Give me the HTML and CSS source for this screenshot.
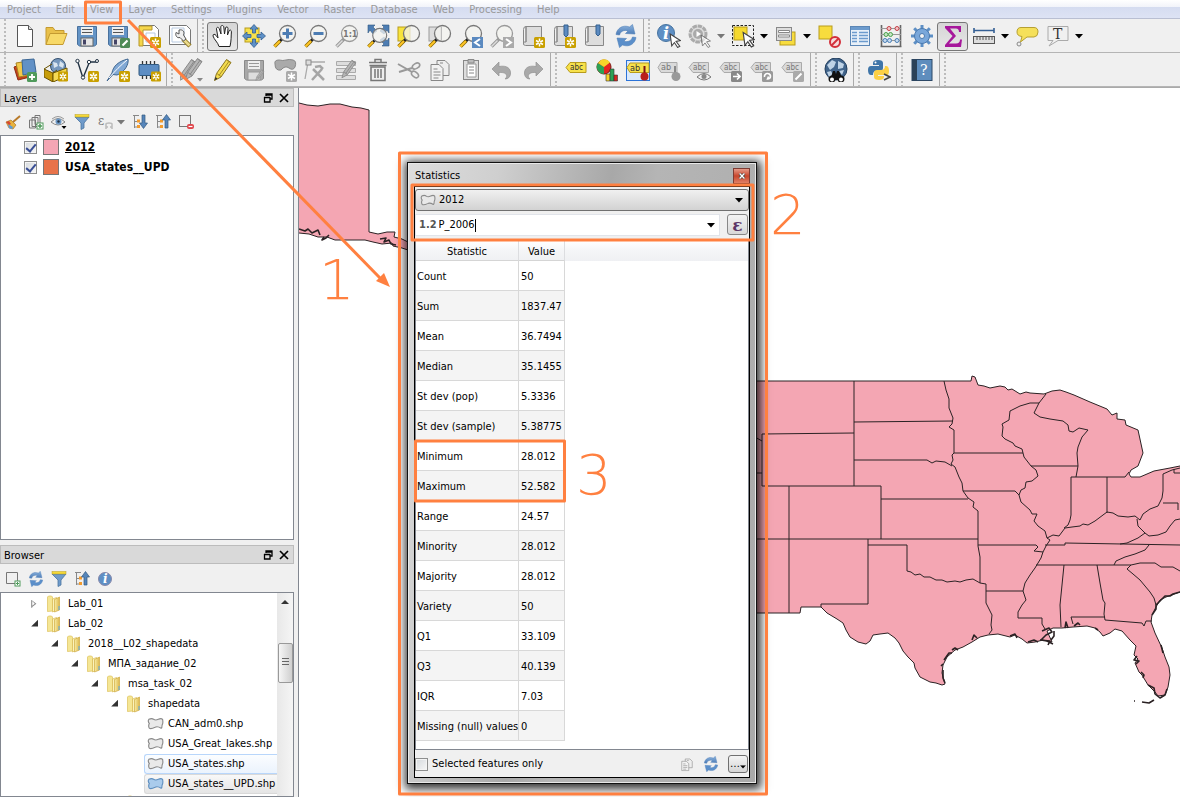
FILE: index.html
```html
<!DOCTYPE html>
<html lang="en">
<head>
<meta charset="utf-8">
<title>Statistics</title>
<link rel="stylesheet" href="styles.css">
</head>
<body>
<svg class="defs" aria-hidden="true">
  <defs>
    <linearGradient id="gFolder" x1="0" x2="1"><stop offset="0" stop-color="#f9eda6"/><stop offset="1" stop-color="#dcb74a"/></linearGradient>
    <linearGradient id="gBlue" x1="0" y1="0" x2="0" y2="1"><stop offset="0" stop-color="#8db4de"/><stop offset="1" stop-color="#4a7ab5"/></linearGradient>
  </defs>
  <symbol id="star" viewBox="0 0 11 11"><rect width="11" height="11" rx="1.5" fill="#c9a000"/><path d="M5.5 1.5v8M2 3.5l7 4M9 3.5l-7 4" stroke="#fff" stroke-width="1.5"/><circle cx="5.5" cy="5.5" r="1" fill="#c9a000"/></symbol>
  <symbol id="stargray" viewBox="0 0 11 11"><rect width="11" height="11" rx="1.5" fill="#aaa"/><path d="M5.5 1.5v8M2 3.5l7 4M9 3.5l-7 4" stroke="#fff" stroke-width="1.5"/></symbol>
  <symbol id="page" viewBox="0 0 24 24"><path d="M4.500 1.500h11l4 4v17h-15z" fill="#fff" stroke="#555"/><path d="M15.500 1.500v4h4" fill="#ddd" stroke="#555"/></symbol>
  <symbol id="floppy" viewBox="0 0 24 24"><path d="M2.500 2.500h19v18l-2 1.500h-15l-2-1.500z" fill="#6494c6" stroke="#49719d"/><rect x="6" y="3" width="12" height="8" fill="#eee"/><path d="M7 5.500h10M7 8.500h10" stroke="#555"/><rect x="6" y="14" width="12" height="8" fill="#e6e6e6" stroke="#666"/><rect x="8" y="15.500" width="3" height="5" fill="#446"/></symbol>
  <symbol id="floppygray" viewBox="0 0 24 24"><path d="M2.500 2.500h19v18l-2 1.500h-15l-2-1.500z" fill="#a8a8a8" stroke="#8a8a8a"/><rect x="6" y="3" width="12" height="8" fill="#eee"/><path d="M7 5.500h10M7 8.500h10" stroke="#999"/><rect x="6" y="14" width="12" height="8" fill="#ddd" stroke="#999"/></symbol>
  <symbol id="mag" viewBox="0 0 24 24"><path d="M9 15l-3 3" stroke="#222" stroke-width="3"/><path d="M7 17l-5.500 5.500" stroke="#8a6a00" stroke-width="3.600"/><path d="M7 17l-5.500 5.500" stroke="#ffc627" stroke-width="2"/><circle cx="14.500" cy="9.500" r="8" fill="#f4f4f0" fill-opacity=".75" stroke="#777" stroke-width="1.300"/></symbol>
  <symbol id="maggray" viewBox="0 0 24 24"><path d="M9 15l-7.500 7.500" stroke="#999" stroke-width="3.400"/><path d="M7.500 16.500l-6 6" stroke="#ddd" stroke-width="1.500"/><circle cx="14.500" cy="9.500" r="8" fill="#f4f4f0" fill-opacity=".75" stroke="#999" stroke-width="1.300"/></symbol>
  <symbol id="sheet" viewBox="0 0 24 24"><path d="M5 2.500h15.500v19H4.500q-3 0-2-3.500h2.500z" fill="#ddd" stroke="#888"/><path d="M5 2.500q-2.500 0-2.500 3v14M5 2.500v15.500" fill="none" stroke="#888"/></symbol>
  <symbol id="refresh" viewBox="0 0 24 24"><path d="M2 10.500C3 4 9 .500 15.500 3l3-2.500 2.500 9.500-9.500-.500 2.500-2.500C10.500 5.500 6.500 7 5.500 11z" fill="url(#gBlue)" stroke="#4f7fb8" stroke-width=".6"/><path d="M22 13.500C21 20 15 23.500 8.500 21l-3 2.500L3 14l9.500.500-2.500 2.500c3.500 1.500 7.500 0 8.500-4z" fill="#5b8fca" stroke="#4f7fb8" stroke-width=".6"/></symbol>
  <symbol id="cursor" viewBox="0 0 12 14"><path d="M1 1l9.500 6-4 .8 3.500 4.600-2 1.100-3-4.600L2.500 12z" fill="#fff" stroke="#444"/></symbol>
  <symbol id="pencil" viewBox="0 0 24 24"><path d="M3.500 22.500l2-7L15.500 1.500l4.500 3-10 14.500z" fill="#f4dc4e" stroke="#8a7420"/><path d="M15.500 2l4.500 3M6 15.500l4 3M17.500 4L8 17.500" stroke="#a48c28"/><path d="M3.500 22.500l1-3.500 2 1.500z" fill="#333"/></symbol>
  <symbol id="pencilgray" viewBox="0 0 24 24"><path d="M3.500 22.500l2-7L15.500 1.500l4.500 3-10 14.500z" fill="#b5b5b5" stroke="#888"/><path d="M15.500 2l4.500 3M6 15.500l4 3M17.500 4L8 17.500" stroke="#888"/></symbol>
  <symbol id="taggray" viewBox="0 0 24 24"><path d="M1 9.500L5 4.500h15.500v10H5z" fill="#dadada" stroke="#aaa"/></symbol>
  <symbol id="shape" viewBox="0 0 18 14"><path d="M2 2q3-1.500 5 0t5 0q3-1.500 4.500 0 .8 4-.5 6 0 3-1 3.500-4-2.500-6.500-1-4 2-6 1-1.500-2.500 0-5Q.5 4 2 2z" fill="#e9e9e9" stroke="#8a8a8a" stroke-width="1.200"/></symbol>
  <symbol id="shapeblue" viewBox="0 0 18 14"><path d="M2 2q3-1.500 5 0t5 0q3-1.500 4.500 0 .8 4-.5 6 0 3-1 3.500-4-2.500-6.500-1-4 2-6 1-1.500-2.500 0-5Q.5 4 2 2z" fill="#a9cbec" stroke="#5f8fbf" stroke-width="1.200"/></symbol>
  <symbol id="folder" viewBox="0 0 16 18"><path d="M1.500 2l1-1h3l1 1v14l-5 .5z" fill="#f5e694" stroke="#dcc15c" stroke-width=".7"/><path d="M6.500 4l4-1.500V15l-4 2z" fill="#fbf3bb" stroke="#d8b950" stroke-width=".7"/><path d="M8.500 4.500l5-2.500v13l-5 2z" fill="url(#gFolder)" stroke="#cfab45" stroke-width=".7"/><path d="M13 11v4" stroke="#5aa9e8"/></symbol>
  <symbol id="funnel" viewBox="0 0 16 16"><path d="M1 3h14l-5 6v5l-3 1.500V9z" fill="#6f9bcb" stroke="#4a739f" stroke-width=".8"/><rect x="1" y=".5" width="14" height="2.500" fill="#f5d93a" stroke="#b9a020" stroke-width=".5"/></symbol>
  <symbol id="treeicon" viewBox="0 0 16 16"><path d="M1 1.500h6M2.500 2v12M2.500 7.500h3M2.500 13h3" stroke="#888" fill="none"/><rect x="5" y="5.500" width="3" height="3" fill="#f39b2d"/><rect x="5" y="11" width="3" height="3" fill="#f39b2d"/></symbol>
  <symbol id="float" viewBox="0 0 10 10"><path d="M3 3V1h6v5H7M3 2h6M1 4.500h6M1.500 4v5H7V4" fill="none" stroke="#000" stroke-width="1.300"/></symbol>
  <symbol id="close" viewBox="0 0 10 10"><path d="M1 1l8 8M9 1l-8 8" stroke="#000" stroke-width="1.700"/></symbol>
  <symbol id="copy" viewBox="0 0 24 24"><path d="M9 2.500h8l4 4v11H9z" fill="#eee" stroke="#888"/><path d="M3 6.500h8l4 4v12H3z" fill="#f2f2f2" stroke="#888"/><path d="M5.500 11h4M5.500 14h7M5.500 17h7M5.500 20h5M12 5h3" stroke="#888"/></symbol>
  <symbol id="down" viewBox="0 0 8 5"><path d="M0 0h8L4 4.500z"/></symbol>
  <symbol id="undo" viewBox="0 0 24 24"><path d="M2 11l7-7v4.500c8-1.500 12 2 11.500 7.500-.3 3-2.500 5-5.500 5 3-2.500 2.500-7-6-6.500V18z" fill="#a9a9a9" stroke="#929292" stroke-width=".7"/></symbol>
</svg>

<nav class="menubar">
  <button>Project</button><button>Edit</button><button>View</button><button>Layer</button><button>Settings</button><button>Plugins</button><button>Vector</button><button>Raster</button><button>Database</button><button>Web</button><button>Processing</button><button>Help</button>
</nav>

<div class="toolrow">
  <div class="toolbar">
    <button aria-label="New"><svg viewBox="0 0 24 24"><use href="#page"/></svg></button>
    <button aria-label="Open"><svg viewBox="0 0 24 24"><path d="M2 20.500V3.500h7l2 3h9v3" fill="#e9c04a" stroke="#c49a30"/><path d="M2 20.500L6 9.500h17l-4 11z" fill="#f7d968" stroke="#c49a30"/></svg></button>
    <button aria-label="Save"><svg viewBox="0 0 24 24"><use href="#floppy"/></svg></button>
    <button aria-label="Save as"><svg viewBox="0 0 24 24"><use href="#floppy"/><rect x="14" y="14" width="10" height="10" rx="1.500" fill="#4f8a57"/><path d="M16.500 21.500l5-5" stroke="#fff" stroke-width="2.200"/></svg></button>
    <button aria-label="New layout"><svg viewBox="0 0 24 24"><path d="M2.500 1.500h15l4 4v16h-19z" fill="#fff" stroke="#777"/><path d="M2 2h13v4H6v16H2z" fill="#f5d64a" stroke="#b5962a"/><path d="M9 9h9v9H9z" fill="none" stroke="#b7c9e0"/><use href="#star" x="13" y="13" width="11" height="11"/></svg></button>
    <button aria-label="Layout manager"><svg viewBox="0 0 24 24"><path d="M1.500 1.500h17l4 4v15h-21z" fill="#fff" stroke="#777"/><path d="M4 4h12v14H4z" fill="none" stroke="#b7c9e0"/><path d="M15 15l7 7" stroke="#8a7420" stroke-width="4.500"/><path d="M15 15l6.500 6.500" stroke="#ead98a" stroke-width="2.600"/><path d="M8 8.500l3 1.500V6c4-1 6 2 4.500 5l2.500 4-2.500 2-3.500-3.500c-3 1-5-2-4-5z" fill="#eee" stroke="#555"/></svg></button>
  </div>
  <div class="toolbar">
    <button class="on" aria-label="Pan"><svg viewBox="0 0 24 24"><path d="M8 22.500c-1-4-5-7-6-10.500-.3-2 2-2.300 3-.6l2 2.600L5.500 5c-.2-2 2-2.300 2.700-.4L10 10 9.800 3c0-2 2.700-2 3 0l.7 7 1-6c.4-1.800 2.600-1.300 2.500.5l-.5 6.500 1.500-4c.7-1.700 2.500-1 2.400.8C20 12 20.500 16 19 22.500z" fill="#fff" stroke="#222"/></svg></button>
    <button aria-label="Pan to selection"><svg viewBox="0 0 24 24"><rect x="3" y="4" width="14" height="14" fill="#f7e14b" stroke="#b89c1c"/><path d="M12 .5l4 4.500h-2.500v4h-3V5H8zM12 23.500l4-4.500h-2.500v-4h-3v4H8zM.5 12L5 8v2.500h4v3H5V16zM23.500 12L19 8v2.500h-4v3h4V16z" fill="#5d90c8" stroke="#34608f" stroke-width=".8"/></svg></button>
    <button aria-label="Zoom in"><svg viewBox="0 0 24 24"><use href="#mag"/><path d="M14.500 4.500v10M9.500 9.500h10" stroke="#4d7db3" stroke-width="3"/></svg></button>
    <button aria-label="Zoom out"><svg viewBox="0 0 24 24"><use href="#mag"/><path d="M9.500 9.500h10" stroke="#4d7db3" stroke-width="3"/></svg></button>
    <button aria-label="Zoom native"><svg viewBox="0 0 24 24"><use href="#maggray"/><text x="8" y="13" class="glyph g9 b" fill="#777">1:1</text></svg></button>
    <button aria-label="Zoom full"><svg viewBox="0 0 24 24"><path d="M2 1h7L7 3l4 4-4 3-3-4-2 3zM23 1h-7l2 2-4 4 4 3 3-4 2 3zM23 22h-7l2-2-4-4 4-3 3 4 2-3z" fill="#4d7db3" stroke="#31597f" stroke-width=".6"/><use href="#mag" width="21" height="21" x="1" y="3"/></svg></button>
    <button aria-label="Zoom selection"><svg viewBox="0 0 24 24"><rect x="1" y="3" width="12" height="14" fill="#f8e43c" stroke="#b89c1c"/><use href="#mag"/></svg></button>
    <button aria-label="Zoom layer"><svg viewBox="0 0 24 24"><rect x="1" y="3" width="12" height="14" fill="#ddd" stroke="#999"/><use href="#mag"/><path d="M13.500 3v13" stroke="#bbb"/></svg></button>
    <button aria-label="Zoom last"><svg viewBox="0 0 24 24"><use href="#mag"/><rect x="13" y="13" width="11" height="11" fill="#5b8ac0"/><path d="M21 15l-5 3.500 5 3.500" fill="none" stroke="#fff" stroke-width="2"/></svg></button>
    <button aria-label="Zoom next"><svg viewBox="0 0 24 24"><use href="#maggray"/><rect x="13" y="13" width="11" height="11" fill="#aaa"/><path d="M16 15l5 3.500-5 3.500" fill="none" stroke="#fff" stroke-width="2"/></svg></button>
    <button aria-label="New view"><svg viewBox="0 0 24 24"><use href="#sheet"/><use href="#star" x="13" y="13" width="11" height="11"/></svg></button>
    <button aria-label="New bookmark"><svg viewBox="0 0 24 24"><use href="#sheet"/><path d="M12 1h4v10l-2 2-2-2z" fill="#5b8ac0" stroke="#34608f"/><use href="#star" x="13" y="13" width="11" height="11"/></svg></button>
    <button aria-label="Bookmarks"><svg viewBox="0 0 24 24"><use href="#sheet"/><path d="M13 1h4v9l-2 2-2-2z" fill="#5b8ac0" stroke="#34608f"/></svg></button>
    <button aria-label="Refresh"><svg viewBox="0 0 24 24"><use href="#refresh"/></svg></button>
  </div>
  <div class="toolbar last">
    <button aria-label="Identify"><svg viewBox="0 0 24 24"><circle cx="9" cy="9" r="8.500" fill="#5e8fc4" stroke="#47739f"/><text x="6" y="15" class="serif g16 b i" fill="#fff">i</text><use href="#cursor" x="12" y="9" width="13" height="15"/></svg></button>
    <button aria-label="Run action"><svg viewBox="0 0 24 24"><circle cx="10" cy="10" r="8" fill="#ddd" stroke="#aaa" stroke-width="3" stroke-dasharray="4.500 .8"/><circle cx="10" cy="10" r="5" fill="#aaa"/><path d="M8.500 7l4.500 3-4.500 3z" fill="#fff"/><use href="#cursor" x="12" y="10" width="12" height="14" opacity=".6"/></svg></button>
    <button class="drop gray" aria-label="Actions"><svg viewBox="0 0 8 5"><use href="#down"/></svg></button>
    <button aria-label="Select"><svg viewBox="0 0 24 24"><rect x="1.500" y="1.500" width="21" height="20" fill="none" stroke="#222" stroke-dasharray="2.500 1.500"/><rect x="3" y="3" width="13" height="13" fill="#f5d92e" stroke="#b89c1c"/><use href="#cursor" x="11" y="7" width="14" height="17"/></svg></button>
    <button class="drop" aria-label="Select modes"><svg viewBox="0 0 8 5"><use href="#down"/></svg></button>
    <button aria-label="Select by form"><svg viewBox="0 0 24 24"><rect x="6" y="8" width="15" height="13" fill="#f7dc3e" stroke="#b89c1c"/><rect x="2.500" y="3.500" width="15" height="13" fill="#dedede" stroke="#888"/><path d="M4.500 6.500h11v2h-11zM4.500 11h11v2h-11z" fill="#fff" stroke="#888"/></svg></button>
    <button class="drop" aria-label="Form modes"><svg viewBox="0 0 8 5"><use href="#down"/></svg></button>
    <button aria-label="Deselect"><svg viewBox="0 0 24 24"><rect x="2" y="2" width="13" height="13" fill="#f7dc3e" stroke="#b89c1c"/><circle cx="18" cy="18" r="5" fill="#f7dcdc" stroke="#d32f3a" stroke-width="2"/><path d="M14.500 21.500l7-7" stroke="#d32f3a" stroke-width="2"/></svg></button>
    <button aria-label="Attribute table"><svg viewBox="0 0 24 24"><rect x="2.500" y="2.500" width="19" height="19" fill="#e8f0f8" stroke="#5b86b5"/><path d="M3 3h18v3H3z" fill="#6c9bcd"/><path d="M4 8.500h5M4 11.500h5M4 14.500h5M4 17.500h5M11 8.500h9M11 11.500h9M11 14.500h9M11 17.500h9" stroke="#6c9bcd" stroke-width="1.500"/></svg></button>
    <button aria-label="Field calculator"><svg viewBox="0 0 24 24"><path d="M2.500 1v22M21.500 1v22M1.500 22.500h21" stroke="#666" stroke-width="1.600"/><path d="M2 4.500h20M2 10.500h20M2 16.500h20" stroke="#999"/><g fill="#f2c6c8" stroke="#c43e45"><circle cx="10" cy="4.500" r="2"/><circle cx="18" cy="4.500" r="2"/></g><g fill="#c5e6c5" stroke="#4ca14c"><circle cx="7" cy="10.500" r="2"/><circle cx="11.500" cy="10.500" r="2"/></g><g fill="#c5daf0" stroke="#4b7fb5"><circle cx="6" cy="16.500" r="2"/><circle cx="10.500" cy="16.500" r="2"/><circle cx="18" cy="16.500" r="2"/></g></svg></button>
    <button aria-label="Toolbox"><svg viewBox="0 0 24 24"><path d="M12 1v22M1 12h22M4.200 4.200l15.600 15.600M19.800 4.200L4.200 19.800" stroke="#5d8fc5" stroke-width="3"/><circle cx="12" cy="12" r="7.500" fill="#79a7da" stroke="#4a7ab0"/><circle cx="12" cy="12" r="2.500" fill="#f4f4f4" stroke="#4a7ab0"/></svg></button>
    <button class="on" aria-label="Statistical summary"><svg viewBox="0 0 24 24"><path d="M4 2h16v6h-2q0-3.500-3-3.500H9L15 12l-7 7.500h7q4 0 4-4h2L20 23H4v-2l7.500-9L4 4z" fill="#a6179b"/></svg></button>
    <button aria-label="Measure"><svg viewBox="0 0 24 24"><path d="M2 6.500h20M2 4v5M22 4v5" stroke="#345f94" stroke-width="1.600"/><rect x="1.500" y="12.500" width="21" height="7" fill="#ddd" stroke="#555"/><path d="M5 13v3M8 13v3M11 13v3M14 13v3M17 13v3M20 13v3" stroke="#555"/></svg></button>
    <button class="drop" aria-label="Measure modes"><svg viewBox="0 0 8 5"><use href="#down"/></svg></button>
    <button aria-label="Map tips"><svg viewBox="0 0 24 24"><path d="M6 3.500h13q4 0 4 4.500t-4 5h-7L5.500 18l1.500-5.500Q2 12 2 8q0-4.500 4-4.500z" fill="#f5e05a" stroke="#b6a032"/><circle cx="4" cy="20" r="2" fill="#eee" stroke="#888"/></svg></button>
    <button aria-label="Text annotation"><svg viewBox="0 0 24 24"><path d="M2 2.500h20v14H12L3 22l4-5.500H2z" fill="#f0f0f0" stroke="#aaa"/><text x="7" y="15" class="serif g14" fill="#333">T</text></svg></button>
    <button class="drop" aria-label="Annotations"><svg viewBox="0 0 8 5"><use href="#down"/></svg></button>
  </div>
</div>

<div class="toolrow">
  <div class="toolbar">
    <button aria-label="Data sources"><svg viewBox="0 0 24 24"><path d="M1 9l12-4 4 14-12 3z" fill="#c4421c" stroke="#8c2d12"/><path d="M3 5l12-2 2 14-11 2z" fill="#f3c94a" stroke="#a88422"/><path d="M9 2l12-1 2 13-13 3z" fill="#6291c6" stroke="#3c6795"/><rect x="14" y="14" width="10" height="10" rx="1.500" fill="#4f9a5b"/><path d="M19 16v6M16 19h6" stroke="#fff" stroke-width="1.800"/></svg></button>
    <button aria-label="New geopackage"><svg viewBox="0 0 24 24"><circle cx="14" cy="8" r="7.500" fill="#7597bd" stroke="#34506f"/><path d="M9 4l4 1 1 3-4 2zM16 3l4 3-1 4-4-2z" fill="#d9e5f0"/><path d="M0 11l9 4v9l-9-5z" fill="#c79d0a" stroke="#6b5300"/><path d="M9 15l14-5v8L9 24z" fill="#f5da53" stroke="#6b5300"/><path d="M0 11l8-5M9 15l4-3" stroke="#6b5300"/><use href="#star" x="14" y="13" width="10" height="11"/></svg></button>
    <button aria-label="New shapefile"><svg viewBox="0 0 24 24"><path d="M2.500 3L8 20 14.500 4M14.500 4h8" fill="none" stroke="#234" stroke-width="1.400"/><g fill="#fff" stroke="#234"><circle cx="2.500" cy="3" r="1.700"/><circle cx="8" cy="19.500" r="1.700"/><circle cx="14" cy="4" r="1.700"/><circle cx="22" cy="3" r="1.500"/></g><use href="#star" x="13" y="13" width="11" height="11"/></svg></button>
    <button aria-label="New spatialite"><svg viewBox="0 0 24 24"><path d="M1 23L6 15C7 8 13 3 22 1c1 5-3 13-11 16l-4-.5z" fill="#82a9d5" stroke="#3f6690"/><path d="M3 20C9 13 15 7 21 2" stroke="#fff" fill="none"/><use href="#star" x="13" y="13" width="11" height="11"/></svg></button>
    <button aria-label="New memory layer"><svg viewBox="0 0 24 24"><path d="M5.500 3v18M9.500 3v18M13.500 3v18M17.500 3v18" stroke="#333" stroke-width="1.300"/><rect x="2" y="6.500" width="20" height="11" rx="1" fill="#5d8dc3" stroke="#31597f"/><use href="#star" x="14" y="13" width="10" height="11"/></svg></button>
  </div>
  <div class="toolbar">
    <button aria-label="Current edits"><svg viewBox="0 0 24 24"><use href="#pencilgray" x="-4"/><use href="#pencilgray" x="2" y="-1"/><path d="M17 20h6l-3 3.500z" fill="#888"/></svg></button>
    <button aria-label="Toggle editing"><svg viewBox="0 0 24 24"><use href="#pencil"/></svg></button>
    <button aria-label="Save edits"><svg viewBox="0 0 24 24"><use href="#floppygray"/><use href="#pencilgray" x="12" y="10" width="12" height="14"/></svg></button>
    <button aria-label="Add feature"><svg viewBox="0 0 24 24"><path d="M2 6Q1 2 6 2q4 1 7 0t7 0q4 1 2 7-2 4-6 1t-8 2q-6 1-6-6z" fill="#aaa" stroke="#888"/><use href="#stargray" x="13" y="13" width="11" height="11"/></svg></button>
    <button aria-label="Vertex tool"><svg viewBox="0 0 24 24"><path d="M4 4l-3 17M4 4h17" stroke="#aaa" stroke-width="1.300"/><rect x="2" y="2" width="5" height="5" fill="#ddd" stroke="#888"/><path d="M9 11l11 11M18 11L8 22M11 9l5-1 3 3" fill="none" stroke="#a5a5a5" stroke-width="2.500"/></svg></button>
    <button aria-label="Modify attributes"><svg viewBox="0 0 24 24"><path d="M1.500 3.500h19v4h-19zM1.500 10.500h19v4h-19zM1.500 17.500h19v4h-19z" fill="#ddd" stroke="#aaa"/><use href="#pencilgray" x="4" y="1" width="20" height="20"/></svg></button>
    <button aria-label="Delete"><svg viewBox="0 0 24 24"><path d="M3.500 7.500h17M3 4.500h18M9 4V1.500h6V4" fill="none" stroke="#777" stroke-width="1.500"/><path d="M5 9h14v13.500H5z" fill="#eee" stroke="#777" stroke-width="1.500"/><path d="M9 11v9M12 11v9M15 11v9" stroke="#777" stroke-width="1.500"/></svg></button>
    <button aria-label="Cut"><svg viewBox="0 0 24 24"><path d="M1 6l14 8M2 14l13-4" stroke="#999" stroke-width="2"/><ellipse cx="19" cy="8" rx="4" ry="2.500" fill="none" stroke="#999" stroke-width="1.600" transform="rotate(-30 19 8)"/><ellipse cx="18" cy="16.500" rx="4" ry="2.500" fill="none" stroke="#999" stroke-width="1.600" transform="rotate(40 18 16.500)"/></svg></button>
    <button aria-label="Copy"><svg viewBox="0 0 24 24"><use href="#copy"/></svg></button>
    <button aria-label="Paste"><svg viewBox="0 0 24 24"><rect x="4.500" y="2.500" width="15" height="19" fill="#ddd" stroke="#888"/><path d="M8 6h9v13H8z" fill="#fff" stroke="#999"/><path d="M9 1.500h6V5H9z" fill="#bbb" stroke="#888"/><path d="M10 9h5M10 12h5M10 15h5" stroke="#888"/></svg></button>
    <button aria-label="Undo"><svg viewBox="0 0 24 24"><use href="#undo"/></svg></button>
    <button aria-label="Redo"><svg viewBox="0 0 24 24"><g transform="translate(24 0) scale(-1 1)"><use href="#undo"/></g></svg></button>
  </div>
  <div class="toolbar">
    <button aria-label="Labels"><svg viewBox="0 0 24 24"><path d="M2 9.500L6 4.500h16v10H6z" fill="#f7e14b" stroke="#b89c1c"/><text x="6" y="12" class="glyph g8" fill="#333">abc</text></svg></button>
    <button aria-label="Diagrams"><svg viewBox="0 0 24 24"><circle cx="9" cy="9" r="7" fill="#e4241f" stroke="#7d1a12"/><path d="M9 9V16A7 7 0 013 5z" fill="#2da155"/><path d="M9 9L3 5a7 7 0 0112-.5z" fill="#f7d42a"/><g stroke="#333" stroke-width=".6"><path d="M11 16h4v7h-4z" fill="#f7d42a"/><path d="M15 11h4v12h-4z" fill="#2da155"/><path d="M19 17h3.500v6H19z" fill="#d52620"/></g></svg></button>
    <button aria-label="Highlight pinned"><svg viewBox="0 0 24 24"><rect x=".5" y="2.500" width="23" height="20" fill="#dbe9fb" stroke="#2b73d8"/><path d="M1 9.500L4 5h19v9.500H4z" fill="#f7e14b" stroke="#b89c1c"/><text x="4" y="13" class="glyph g9" fill="#333">ab</text><path d="M18.500 8v8" stroke="#7a1410" stroke-width="2"/><circle cx="18.500" cy="18.500" r="4" fill="#b9201b"/></svg></button>
    <button aria-label="Pin labels"><svg viewBox="0 0 24 24"><path d="M1 9.500L4 4.500h16v10H4z" fill="#dadada" stroke="#aaa"/><text x="4" y="12" class="glyph g9" fill="#777">ab</text><path d="M18 8v8" stroke="#888" stroke-width="2"/><circle cx="19" cy="18.500" r="4.500" fill="#999"/></svg></button>
    <button aria-label="Show labels"><svg viewBox="0 0 24 24"><use href="#taggray"/><text x="5" y="12" class="glyph g8" fill="#777">abc</text><path d="M9 19q7-7 14 0-7 6-14 0z" fill="#eee" stroke="#777"/><circle cx="16" cy="18.500" r="2.500" fill="#888"/></svg></button>
    <button aria-label="Move labels"><svg viewBox="0 0 24 24"><use href="#taggray"/><text x="5" y="12" class="glyph g8" fill="#777">abc</text><rect x="12" y="13" width="11" height="11" rx="1.500" fill="#888"/><path d="M14 18.500h6M18 15.500l3 3-3 3" fill="none" stroke="#fff" stroke-width="1.700"/></svg></button>
    <button aria-label="Rotate labels"><svg viewBox="0 0 24 24"><use href="#taggray"/><text x="5" y="12" class="glyph g8" fill="#777">abc</text><rect x="12" y="13" width="11" height="11" rx="1.500" fill="#999"/><path d="M14.500 19a3 3 0 116-1q0 3-3 3l1-2.500" fill="none" stroke="#fff" stroke-width="1.600"/></svg></button>
    <button aria-label="Change label"><svg viewBox="0 0 24 24"><use href="#taggray"/><text x="5" y="12" class="glyph g8" fill="#777">abc</text><rect x="12" y="13" width="11" height="11" rx="1.500" fill="#aaa"/><path d="M14.500 21.500l6-6" stroke="#fff" stroke-width="2"/></svg></button>
  </div>
  <div class="toolbar"><button aria-label="Metasearch"><svg viewBox="0 0 24 24"><circle cx="12" cy="11" r="11" fill="#41648b" stroke="#24405f"/><path d="M3 7l5-5 4 2-2 5-4 3zM14 3l6 3-1 4-5 1zM3 14l4-1 2 4-4 2zM15 13l5-1-2 5z" fill="#bfd3e6"/><path d="M6 22l3-9h2l1 3 1-3h2l4 9z" fill="#111"/><circle cx="8" cy="21" r="3.500" fill="#111"/><circle cx="17" cy="21" r="3.500" fill="#111"/><circle cx="8" cy="21.500" r="2" fill="#fff"/><circle cx="17" cy="21.500" r="2" fill="#fff"/></svg></button></div>
  <div class="toolbar"><button aria-label="Python console"><svg viewBox="0 0 24 24"><path d="M11 2q5 0 5 3v5q0 3-3 3H9q-3 0-3 4H4q-3 0-3-5 0-4 3-4h8V7H6V5q0-3 5-3z" fill="#3f75a8"/><path d="M12 22q-5 0-5-3v-4q0-3 3-3h4q4 0 4-4h1q3 0 3 5t-3 4h-8v1h6v1q0 3-5 3z" fill="#fcd045"/><circle cx="8.500" cy="4.500" r="1" fill="#fff"/><path d="M17 16l6 3-6 3" fill="none" stroke="#444" stroke-width="1.600"/></svg></button></div>
  <div class="toolbar"><button aria-label="Help"><svg viewBox="0 0 24 24"><rect x="2" y="1.500" width="20" height="21" fill="#5e8dbd" stroke="#2c4866"/><rect x="2" y="1.500" width="5" height="21" fill="#2c4258"/><text x="10" y="17" class="serif g14" fill="#fff">?</text></svg></button></div>
  <div class="toolbar last"></div>
</div>

<main class="workspace">
  <aside class="docks">
    <header class="docktitle"><span>Layers</span><button aria-label="Float"><svg viewBox="0 0 10 10"><use href="#float"/></svg></button><button aria-label="Close"><svg viewBox="0 0 10 10"><use href="#close"/></svg></button></header>
    <div class="docktools">
      <button aria-label="Style"><svg viewBox="0 0 16 16"><path d="M1 8l5-2 5 5-3 4-4-1z" fill="#e8b23b" stroke="#a0691c" stroke-width=".6"/><path d="M3 10l5 3-1 2-3-1z" fill="#5b9ad6"/><path d="M1 8l3-1 2 3-2 1z" fill="#d8472f"/><path d="M8 8l7-6" stroke="#b87a2a" stroke-width="2"/></svg></button>
      <button aria-label="Add group"><svg viewBox="0 0 16 16"><path d="M1.500 6h6v8h-6zM4 3.500h6v9H4zM7 1.500h5v9H7z" fill="#eee" stroke="#777"/><rect x="9" y="9" width="6" height="6" fill="#fff" stroke="#4f9a5b"/><path d="M12 10v4M10 12h4" stroke="#4f9a5b" stroke-width="1.500"/></svg></button>
      <button aria-label="Visibility"><svg viewBox="0 0 16 16"><path d="M0 8q7-7 14 0-7 6-14 0z" fill="#eee" stroke="#888"/><path d="M1 5q6-5 12 0" fill="none" stroke="#999"/><circle cx="7.500" cy="7.500" r="3" fill="#6b97c4"/><circle cx="7.500" cy="7.500" r="1.200" fill="#234"/><path d="M10.500 12h5L13 15z"/></svg></button>
      <button aria-label="Filter legend"><svg viewBox="0 0 16 16"><use href="#funnel"/></svg></button>
      <button aria-label="Filter by expression"><svg viewBox="0 0 16 16"><text x="1" y="11" class="serif g12" fill="#777">ε</text><path d="M9 15v-5q0-1 3-1t3 1v5M9 13h2M13 13h2" fill="none" stroke="#bbb" stroke-width="1.500"/></svg></button>
      <button class="drop gray" aria-label="Expression modes"><svg viewBox="0 0 8 5"><use href="#down"/></svg></button>
      <button aria-label="Expand all"><svg viewBox="0 0 16 16"><use href="#treeicon"/><path d="M10 1h3v8h2.500l-4 5.500L7.500 9H10z" fill="#5685ba" stroke="#31597f" stroke-width=".7"/></svg></button>
      <button aria-label="Collapse all"><svg viewBox="0 0 16 16"><use href="#treeicon"/><path d="M10 14h3V6h2.500l-4-5.500L7.500 6H10z" fill="#5685ba" stroke="#31597f" stroke-width=".7"/></svg></button>
      <button aria-label="Remove"><svg viewBox="0 0 16 16"><rect x="1.500" y="1.500" width="11" height="11" fill="#f0f0f0" stroke="#777"/><rect x="9" y="10" width="7" height="5" rx="2" fill="#e0444a"/><path d="M10.500 12.500h4" stroke="#fff" stroke-width="1.200"/></svg></button>
    </div>
    <section class="tree layers">
      <label><input type="checkbox" checked><i class="swatch pink"></i><span class="active">2012</span></label>
      <label><input type="checkbox" checked><i class="swatch orange"></i><span>USA_states__UPD</span></label>
    </section>
    <header class="docktitle second"><span>Browser</span><button aria-label="Float"><svg viewBox="0 0 10 10"><use href="#float"/></svg></button><button aria-label="Close"><svg viewBox="0 0 10 10"><use href="#close"/></svg></button></header>
    <div class="docktools">
      <button aria-label="Add selected"><svg viewBox="0 0 16 16"><path d="M1.500 1.500h11v11h-11z" fill="#f0f0f0" stroke="#777"/><rect x="10" y="10" width="5" height="5" fill="#fff" stroke="#4f9a5b"/><path d="M12.500 11v3M11 12.500h3" stroke="#4f9a5b"/></svg></button>
      <button aria-label="Refresh"><svg viewBox="0 0 24 24"><use href="#refresh"/></svg></button>
      <button aria-label="Filter"><svg viewBox="0 0 16 16"><use href="#funnel"/></svg></button>
      <button aria-label="Collapse"><svg viewBox="0 0 16 16"><use href="#treeicon"/><path d="M10 14h3V6h2.500l-4-5.500L7.500 6H10z" fill="#5685ba" stroke="#31597f" stroke-width=".7"/></svg></button>
      <button aria-label="Properties"><svg viewBox="0 0 16 16"><circle cx="8" cy="8" r="6.500" fill="#5e8fc4" stroke="#88a"/><text x="6" y="12" class="serif g12 b i" fill="#fff">i</text></svg></button>
    </div>
    <section class="tree browser">
      <ul>
        <li class="d0 shut"><svg viewBox="0 0 16 18"><use href="#folder"/></svg><span>Lab_01</span></li>
        <li class="d0 open"><svg viewBox="0 0 16 18"><use href="#folder"/></svg><span>Lab_02</span></li>
        <li class="d1 open"><svg viewBox="0 0 16 18"><use href="#folder"/></svg><span>2018__L02_shapedata</span></li>
        <li class="d2 open"><svg viewBox="0 0 16 18"><use href="#folder"/></svg><span>МПА_задание_02</span></li>
        <li class="d3 open"><svg viewBox="0 0 16 18"><use href="#folder"/></svg><span>msa_task_02</span></li>
        <li class="d4 open"><svg viewBox="0 0 16 18"><use href="#folder"/></svg><span>shapedata</span></li>
        <li class="file"><svg viewBox="0 0 18 14"><use href="#shape"/></svg><span>CAN_adm0.shp</span></li>
        <li class="file"><svg viewBox="0 0 18 14"><use href="#shape"/></svg><span>USA_Great_lakes.shp</span></li>
        <li class="file hover"><svg viewBox="0 0 18 14"><use href="#shape"/></svg><span>USA_states.shp</span></li>
        <li class="file picked"><svg viewBox="0 0 18 14"><use href="#shapeblue"/></svg><span>USA_states__UPD.shp</span></li>
        <li class="d4"><svg viewBox="0 0 16 18"><use href="#folder"/></svg></li>
      </ul>
      <div class="scroll"><i class="up"></i><i class="thumb"></i></div>
    </section>
  </aside>

  <section class="map">
    <svg viewBox="299 88 881 709" preserveAspectRatio="xMinYMin slice">
      <g class="land">
        <path d="M290 104l9-1 8 2 11 1 12-2 10 0 12 3 9 1 8 2v122l9 2 9-2 8 0-1 5 8 2 12 6v7l-12-4-9-2-1-3-10 1-9-2-8-2-12 0-18 0-8-3-9 0-9-3-20-2z"/>
        <path d="M755 381H971L972 376 975 377 978 385 984 386 990 388 1000 386 1005 387 1008 390 1012 389 1020 394 1026 392 1030 393 1044 394 1052 391 1060 390 1066 392 1074 395 1090 402 1107 409 1112 415 1117 413 1117 419 1125 420 1126 425 1138 430 1143 453 1138 466 1131 470 1129 474 1131 477 1140 477 1154 471 1170 468 1190 464V588L1180 592 1166 597 1160 600 1156 607 1152 615 1151 622 1155 633 1162 648 1165 657 1169 667 1170 675 1168 687 1165 695 1158 696 1155 692 1148 685 1142 675 1139 672 1135 663 1138 659 1134 655 1136 646 1130 640 1122 631 1115 629 1110 633 1103 636 1100 632 1095 628 1087 626 1073 627 1062 628 1053 628 1047 631 1052 642 1043 640 1035 642 1027 643 1022 639 1015 635 1010 637 998 634 988 635 980 637 972 642 963 647 955 650 947 657 943 665 942 673 945 684 942 685 936 683 930 682 920 677 915 668 914 663 908 657 903 651 899 643 895 638 888 633 880 634 873 635 870 641 866 644 858 642 850 637 846 630 843 623 837 619 827 613 821 607H801L800 613H755z"/>
      </g>
      <g class="borders">
        <path d="M854 381V486M755 434M762 434L854 433M762 434V486H881M755 437L762 441M755 473H762M789 486V613M755 539H978M881 486V539M881 499H968M854 422L953 421M854 460H927L932 463 936 461 945 462 952 466"/>
        <path d="M944 381L946 390 949 399 949 408 953 418 952 424 949 427 954 430V453L952 455 953 460 951 464 955 467 959 477 962 483 963 491 968 498 974 502 973 507 978 511V546L980 557V583M868 539V545H907V571L911 572 915 575 920 574 924 577 930 577 936 580 942 580 947 582 955 581 960 582 966 580 973 579 980 583 986 584V603L990 611 992 615 991 625 992 630 989 634M868 545V604H821V607"/>
        <path d="M954 453H1023M963 491H1015L1019 495M978 545H1036L1038 547 1034 551 1043 552M986 591H1023M1039 403H1030L1020 406 1010 411 1009 420 1002 424 1003 427 1002 436 1005 439 1013 443 1015 446 1022 449 1024 457 1031 466 1036 470 1038 476 1032 481 1026 482 1025 488 1021 490 1019 495 1021 502 1030 510 1032 514 1037 514 1034 521 1038 526 1045 531 1047 538 1050 540 1046 546 1043 552 1041 558 1038 563 1035 568 1030 575 1025 583 1023 591 1026 600 1022 605 1018 612V618H1042L1042 624 1045 629"/>
        <path d="M1046 394L1039 403 1034 413 1040 417 1050 419 1063 421 1068 425 1069 431 1073 432 1079 428 1088 430 1082 437 1078 447 1077 453 1078 466 1076 477M1031 466H1078M1071 477H1125L1129 472M1071 477V515L1070 520 1068 525 1064 528M1107 477V513M1047 538L1053 535 1059 536 1065 528 1072 527 1080 526 1083 524 1088 525 1095 521 1099 518 1107 512 1113 513 1118 516 1128 517 1135 516 1140 520 1143 514 1150 509 1158 506 1162 498 1163 491 1163 474 1172 470 1180 468M1137 519L1138 526 1145 533 1138 538 1127 543 1120 544M1145 533L1149 536 1158 535 1166 532 1170 526 1175 520 1180 519M1163 503H1178V510M1174 469V473H1180"/>
        <path d="M1045 545H1065V543L1180 545M1036 565H1131L1140 563 1155 563 1161 567 1173 567 1180 571M1149 545L1145 550 1135 554 1125 557 1116 561 1114 565M1131 565L1127 569 1133 574 1140 580 1150 592 1154 598 1156 605M1064 565L1060 605 1061 627M1097 565L1100 583 1103 600 1105 603 1104 614 1105 620 1142 623 1144 626 1146 621 1152 621M1105 617H1071L1073 624"/>
      </g>
      <g class="rough">
        <path d="M299 229l6 2 3-2 4 4 6-3 2 5M324 237l-2 3 4-2 3-3M380 239l6-1-2 4 5-2 2 4 5 1"/>
        <path d="M1180 592l-7 2-3 2-5 0-4 4-5 5 0 4-4 6M1161 645l2 8M1137 656l-3 4 5 1-3 3M1141 672l3 3-1 3M1148 685l6 3 1 6M1155 694l5 4 5-3 2-6M1142 702l7 1 5-3M1134 701h1M1074 626l4-3 2 2M1095 628l3 2M1065 628l1-6 2 6M1042 631l7-3 3 4-6 3-5 5 6 1 6 3M1054 631l0 5-3 4M1040 640l10 1-2 4M1028 642l6-2 4 2M1010 636l5-2 2 4M972 640l2-5 3 3M952 650l3-2 3 2M944 660l5-7 3 0M941 666l2-2M943 670l0 8 2 5"/>
      </g>
    </svg>
  </section>
</main>

<section class="dialog" role="dialog" aria-label="Statistics">
  <header><h1>Statistics</h1><button aria-label="Close dialog"><svg viewBox="0 0 10 10"><path d="M2 2l6 6M8 2L2 8" stroke="#333" stroke-width="3.400"/><path d="M2 2l6 6M8 2L2 8" stroke="#fff" stroke-width="1.800"/></svg></button></header>
  <div class="panel">
    <div class="layerpick"><svg class="lead" viewBox="0 0 18 14"><use href="#shape"/></svg><select aria-label="Layer"><option>2012</option></select><svg class="arrow" viewBox="0 0 8 5"><use href="#down"/></svg></div>
    <div class="fieldrow">
      <div class="fieldpick"><b>1.2</b><input type="text" aria-label="Field" value="P_2006"><i class="caret"></i><button aria-label="Show fields"><svg viewBox="0 0 8 5"><use href="#down"/></svg></button></div>
      <button class="expr" aria-label="Expression">ε</button>
    </div>
    <div class="results">
      <table>
        <thead><tr><th>Statistic</th><th>Value</th></tr></thead>
        <tbody>
          <tr><td>Count</td><td>50</td></tr>
          <tr><td>Sum</td><td>1837.47</td></tr>
          <tr><td>Mean</td><td>36.7494</td></tr>
          <tr><td>Median</td><td>35.1455</td></tr>
          <tr><td>St dev (pop)</td><td>5.3336</td></tr>
          <tr><td>St dev (sample)</td><td>5.38775</td></tr>
          <tr><td>Minimum</td><td>28.012</td></tr>
          <tr><td>Maximum</td><td>52.582</td></tr>
          <tr><td>Range</td><td>24.57</td></tr>
          <tr><td>Minority</td><td>28.012</td></tr>
          <tr><td>Majority</td><td>28.012</td></tr>
          <tr><td>Variety</td><td>50</td></tr>
          <tr><td>Q1</td><td>33.109</td></tr>
          <tr><td>Q3</td><td>40.139</td></tr>
          <tr><td>IQR</td><td>7.03</td></tr>
          <tr><td>Missing (null) values</td><td>0</td></tr>
        </tbody>
      </table>
    </div>
    <footer>
      <label><input type="checkbox"><span>Selected features only</span></label>
      <button class="flat" aria-label="Copy"><svg viewBox="0 0 24 24"><use href="#copy"/></svg></button>
      <button class="flat" aria-label="Recalculate"><svg viewBox="0 0 24 24"><use href="#refresh"/></svg></button>
      <button class="more" aria-label="More statistics">…<svg viewBox="0 0 8 5"><use href="#down"/></svg></button>
    </footer>
  </div>
</section>

<svg class="notes" viewBox="0 0 1180 797">
  <g class="frames">
    <rect x="85.500" y="2" width="35" height="21"/>
    <rect x="399.500" y="153" width="367" height="641"/>
    <rect x="412" y="185" width="341" height="55"/>
    <rect x="415.500" y="441" width="149" height="60"/>
    <path d="M128 20L380 278"/>
  </g>
  <path class="head" d="M390 287l-14-6 8-8z"/>
  <text x="319" y="299">1</text>
  <text x="770" y="234">2</text>
  <text x="576" y="494">3</text>
</svg>
</body>
</html>
```
FILE: styles.css
```css
* { box-sizing: border-box; }

body {
  margin: 0;
  height: 100vh;
  display: flex;
  flex-direction: column;
  overflow: hidden;
  position: relative;
  background: #f0f0f0;
  color: #000;
  font: 11px/14px "DejaVu Sans Condensed", "DejaVu Sans", Tahoma, sans-serif;
}

button {
  margin: 0;
  padding: 0;
  border: 0;
  background: none;
  color: inherit;
  font: inherit;
}

.defs { position: absolute; width: 0; height: 0; }
svg { display: block; fill: currentColor; }

.glyph { font-family: "DejaVu Sans Condensed", "DejaVu Sans", sans-serif; }
.serif { font-family: "DejaVu Serif", serif; }
.g8 { font-size: 8px; }
.g9 { font-size: 9px; }
.g12 { font-size: 12px; }
.g14 { font-size: 14px; }
.g16 { font-size: 16px; }
.b { font-weight: bold; }
.i { font-style: italic; }

/* menu */
.menubar {
  flex: none;
  height: 19px;
  display: flex;
  align-items: center;
  gap: 15px;
  padding: 2px 7px 0;
  color: #9a9a9a;
  background: linear-gradient(#fff 0, #f2f4fa 38%, #d5dcf0 40%, #dde3f4 100%);
  border-bottom: 1px solid #b9bfd2;
}

/* toolbars */
.toolrow {
  flex: none;
  height: 34px;
  display: flex;
  border-bottom: 1px solid #b5b5b5;
}
.toolbar {
  display: flex;
  align-items: center;
  padding: 1px 2px 0 9px;
  border-right: 1px solid #aaa;
  background: radial-gradient(circle, #bcbcbc 1px, transparent 1px) 3px 3px / 4px 4px repeat-y;
}
.toolbar.last { border-right: 0; }
.toolbar button {
  width: 31px;
  height: 29px;
  display: grid;
  place-items: center;
}
.toolbar svg { width: 24px; height: 24px; }
.toolbar .on {
  border: 1px solid #777;
  border-radius: 3px;
  background: linear-gradient(#d6d6d6, #e6e6e6);
}
.toolbar .drop { width: 12px; }
.drop.gray { color: #777; }
.toolbar .drop svg, .docktools .drop svg { width: 8px; height: 5px; }

/* docks */
.workspace {
  flex: 1;
  min-height: 0;
  display: flex;
  gap: 4px;
  border-top: 1px solid #aaa;
}
.docks {
  flex: none;
  width: 294px;
  display: flex;
  flex-direction: column;
}
.docktitle {
  flex: none;
  height: 19px;
  display: flex;
  align-items: center;
  gap: 6px;
  padding: 3px 4px 0 3px;
  background: #d9d9d9;
  border: 1px solid #bcbcbc;
}
.docktitle.second { margin-top: 5px; }
.docktitle span { flex: 1; }
.docktitle svg { width: 10px; height: 10px; margin-bottom: 2px; }
.docktools {
  flex: none;
  height: 28px;
  display: flex;
  align-items: center;
  gap: 7px;
  padding: 2px 5px 0;
}
.docktools svg { width: 16px; height: 16px; }
.docktools .drop { margin: 0 0 0 -3px; }
.tree {
  min-height: 0;
  background: #fff;
  border: 1px solid #828790;
}
.layers {
  flex: 81 1 0;
  padding: 1px 0 0 23px;
  font-size: 12px;
  font-weight: bold;
}
.layers label { height: 20px; display: flex; align-items: center; }
.layers .active { text-decoration: underline; }
input[type="checkbox"] {
  appearance: none;
  flex: none;
  width: 13px;
  height: 13px;
  margin: 0;
  display: grid;
  place-items: center;
  border: 1px solid #8e8f8f;
  background: linear-gradient(135deg, #d5d9dd, #f7f7f7);
  box-shadow: inset 0 0 0 1px #f4f4f4;
}
input[type="checkbox"]:checked::before {
  content: "";
  width: 4px;
  height: 8px;
  border: solid #3a4f95;
  border-width: 0 2px 2px 0;
  transform: rotate(40deg);
}
.swatch { width: 16px; height: 16px; margin: 0 6px; border: 1px solid #777; }
.pink { background: #f4a6b4; }
.orange { background: #e8734a; }

.browser { flex: 41 1 0; display: flex; }
.browser ul { flex: 1; min-width: 0; margin: 0; padding: 1px 0; list-style: none; overflow: hidden; }
.browser li {
  height: 20px;
  display: flex;
  align-items: center;
  gap: 6px;
  white-space: nowrap;
}
.browser li span { padding-top: 1px; }
.browser li svg { flex: none; width: 16px; height: 18px; }
.browser li::before { content: ""; width: 8px; height: 8px; margin-right: 2px; }
.open::before { background: #333; clip-path: polygon(100% 0, 100% 85%, 15% 85%); }
.shut::before { background: #888; clip-path: polygon(15% 0, 80% 50%, 15% 100%, 15% 85%, 60% 50%, 28% 16%, 28% 100%, 15% 100%); }
.d0 { padding-left: 29px; }
.d1 { padding-left: 49px; }
.d2 { padding-left: 69px; }
.d3 { padding-left: 89px; }
.d4 { padding-left: 109px; }
.browser .file { margin-left: 143px; padding-left: 2px; gap: 4px; border: 1px solid transparent; border-right: 0; }
.browser .file::before { display: none; }
.browser .file svg { width: 17px; height: 14px; }
.browser .hover { border-color: #b8d6fb; background: linear-gradient(#fbfdff, #ebf3fd); border-radius: 3px 0 0 3px; }
.browser .picked { border-color: #d9d9d9; background: linear-gradient(#f8f8f8, #e5e5e5); border-radius: 3px 0 0 3px; }
.scroll {
  flex: none;
  width: 16px;
  display: flex;
  flex-direction: column;
  align-items: center;
  gap: 39px;
  padding-top: 7px;
  background: linear-gradient(90deg, #e8e8e8, #f5f5f5);
}
.up { border: 4px solid transparent; border-top: 0; border-bottom-color: #333; }
.thumb {
  width: 15px;
  height: 40px;
  border: 1px solid #999;
  border-radius: 2px;
  background: repeating-linear-gradient(#666 0 1px, transparent 1px 3px) center / 7px 9px no-repeat, linear-gradient(90deg, #f6f6f6, #cfcfcf);
}

/* map */
.map { flex: 1; min-width: 0; background: #fff; border-left: 1px solid #828790; }
.map svg { width: 100%; height: 100%; stroke: #2b2224; stroke-linejoin: round; }
.land { fill: #f4a6b3; }
.borders { fill: none; }
.rough { fill: none; stroke-width: 1.6; }

/* statistics dialog */
.dialog {
  position: absolute;
  left: 407px;
  top: 162px;
  width: 350px;
  height: 622px;
  display: flex;
  flex-direction: column;
  padding: 0 6px 5px;
  border: 1px solid #111;
  background: linear-gradient(100deg, #ddd 0, #cfcfcf 20%, #a8a8a8 45%, #b5b5b5 55%, #a9a9a9 100%);
  box-shadow: inset 0 0 0 1px #e8e8e8, 1px 2px 9px 3px rgba(0, 0, 0, .8);
}
.dialog header { flex: none; height: 23px; display: flex; align-items: center; justify-content: space-between; padding: 2px 0 0 1px; }
.dialog h1 { margin: 0; font: inherit; }
.dialog header button {
  width: 17px;
  height: 16px;
  display: grid;
  place-items: center;
  border: 1px solid #7d3c34;
  background: linear-gradient(#e69a88, #c8452c 50%, #df8066);
}
.dialog header svg { width: 8px; height: 8px; }
.panel {
  flex: 1;
  min-height: 0;
  display: flex;
  flex-direction: column;
  border: 1px solid #000;
  background: #f0f0f0;
}
.layerpick {
  flex: none;
  height: 22px;
  margin-top: 2px;
  display: flex;
  align-items: center;
  padding: 0 5px 0 4px;
  border: 1px solid #707070;
  border-radius: 3px;
  background: linear-gradient(#f0f0f0, #d2d2d2);
}
.layerpick .lead { width: 16px; height: 13px; }
select {
  appearance: none;
  flex: 1;
  margin: 0;
  padding: 0 3px;
  border: 0;
  background: none;
  color: inherit;
  font: inherit;
}
.arrow, .fieldpick svg { width: 8px; height: 5px; }
.fieldrow { flex: none; display: flex; gap: 7px; margin: 3px 1px 4px 0; }
.fieldpick {
  flex: 1;
  height: 22px;
  display: flex;
  align-items: center;
  padding: 0 4px 0 3px;
  border: 1px solid #e1e4ea;
  background: #fff;
}
.fieldpick b { color: #555; margin-right: 2px; }
.fieldpick input { field-sizing: content; padding: 0; border: 0; outline: 0; font: inherit; }
.caret { width: 1px; height: 13px; background: #000; }
.fieldpick button { margin-left: auto; }
.expr {
  width: 21px;
  height: 21px;
  border: 1px solid #888;
  border-radius: 3px;
  background: linear-gradient(#f4f4f4, #d8d8d8);
  color: #5c3566;
  font: bold 17px/14px "DejaVu Serif", serif;
}
.results {
  flex: 1;
  min-height: 0;
  border: 1px solid #828790;
  background: linear-gradient(#fff 0, #f4f5f7 50%, #eff0f3 100%) 0 0 / 100% 20px no-repeat #fff;
}
table { border-collapse: separate; border-spacing: 0; table-layout: fixed; width: 149px; }
th { width: 103px; height: 20px; padding: 2px 0 0; font-weight: normal; border-right: 1px solid #dcdde0; border-bottom: 1px solid #d5d5d5; }
th + th { width: 46px; }
td { height: 30px; padding: 2px 0 0 1px; white-space: nowrap; border: solid #d8d8d8; border-width: 0 1px 1px 0; background: #fff; }
td + td { padding-left: 2px; }
tr:nth-child(even) td { background: #f4f4f4; }
.dialog footer { flex: none; height: 27px; display: flex; align-items: center; gap: 9px; padding: 1px 1px 0 0; }
.dialog label { flex: 1; display: flex; align-items: center; gap: 4px; }
.flat svg { width: 16px; height: 16px; }
.flat:first-of-type svg { width: 14px; height: 15px; }
.more {
  width: 20px;
  height: 18px;
  display: flex;
  align-items: center;
  justify-content: center;
  border: 1px solid #707070;
  border-radius: 3px;
  background: linear-gradient(#f4f4f4, #d5d5d5);
}
.more svg { width: 6px; height: 4px; margin-top: 6px; }

/* annotations */
.notes { position: absolute; left: 0; top: 0; width: 1180px; height: 797px; pointer-events: none; }
.frames { fill: none; stroke: #ff8040; stroke-width: 3; stroke-linejoin: round; }
.head { fill: #ff8040; }
.notes text { font: 200 56px "DejaVu Sans Light", "DejaVu Sans", sans-serif; fill: #ff8040; }
```
